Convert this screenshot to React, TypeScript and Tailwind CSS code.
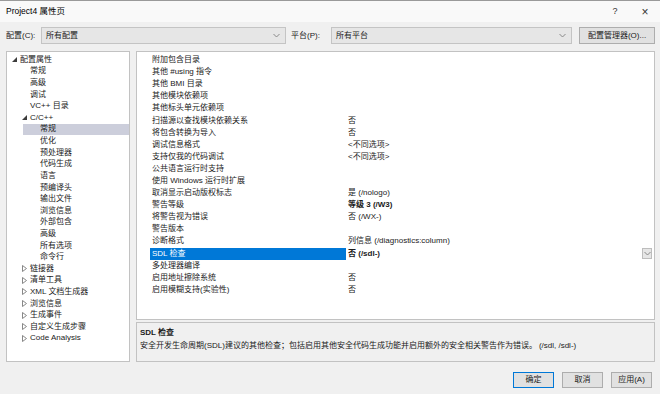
import React from 'react'

type TreeItem = {
    label: string
    level: 0 | 1 | 2
    toggle?: 'open' | 'closed'
    selected?: boolean
}

const tree: TreeItem[] = [
    { label: '配置属性', level: 0, toggle: 'open' },
    { label: '常规', level: 1 },
    { label: '高级', level: 1 },
    { label: '调试', level: 1 },
    { label: 'VC++ 目录', level: 1 },
    { label: 'C/C++', level: 1, toggle: 'open' },
    { label: '常规', level: 2, selected: true },
    { label: '优化', level: 2 },
    { label: '预处理器', level: 2 },
    { label: '代码生成', level: 2 },
    { label: '语言', level: 2 },
    { label: '预编译头', level: 2 },
    { label: '输出文件', level: 2 },
    { label: '浏览信息', level: 2 },
    { label: '外部包含', level: 2 },
    { label: '高级', level: 2 },
    { label: '所有选项', level: 2 },
    { label: '命令行', level: 2 },
    { label: '链接器', level: 1, toggle: 'closed' },
    { label: '清单工具', level: 1, toggle: 'closed' },
    { label: 'XML 文档生成器', level: 1, toggle: 'closed' },
    { label: '浏览信息', level: 1, toggle: 'closed' },
    { label: '生成事件', level: 1, toggle: 'closed' },
    { label: '自定义生成步骤', level: 1, toggle: 'closed' },
    { label: 'Code Analysis', level: 1, toggle: 'closed' },
]

const indent = ['pl-[3px]', 'pl-[13px]', 'pl-[23px]']

type Prop = { name: string; value?: string; bold?: boolean; selected?: boolean }

const props: Prop[] = [
    { name: '附加包含目录' },
    { name: '其他 #using 指令' },
    { name: '其他 BMI 目录' },
    { name: '其他模块依赖项' },
    { name: '其他标头单元依赖项' },
    { name: '扫描源以查找模块依赖关系', value: '否' },
    { name: '将包含转换为导入', value: '否' },
    { name: '调试信息格式', value: '<不同选项>' },
    { name: '支持仅我的代码调试', value: '<不同选项>' },
    { name: '公共语言运行时支持' },
    { name: '使用 Windows 运行时扩展' },
    { name: '取消显示启动版权标志', value: '是 (/nologo)' },
    { name: '警告等级', value: '等级 3 (/W3)', bold: true },
    { name: '将警告视为错误', value: '否 (/WX-)' },
    { name: '警告版本' },
    { name: '诊断格式', value: '列信息 (/diagnostics:column)' },
    { name: 'SDL 检查', value: '否 (/sdl-)', bold: true, selected: true },
    { name: '多处理器编译' },
    { name: '启用地址擦除系统', value: '否' },
    { name: '启用模糊支持(实验性)', value: '否' },
]

function Chevron() {
    return (
        <svg width="7" height="5" viewBox="0 0 7 5" className="shrink-0">
            <polyline points="0.5,1 3.5,4 6.5,1" fill="none" stroke="#808080" strokeWidth="0.9" />
        </svg>
    )
}

function Toggle({ kind }: { kind?: 'open' | 'closed' }) {
    return (
        <span className="flex w-[10px] shrink-0 items-center pl-[2px]">
            {kind === 'open' && (
                <svg width="5" height="5" viewBox="0 0 5 5">
                    <polygon points="5,0 5,5 0,5" fill="#3c3c3c" />
                </svg>
            )}
            {kind === 'closed' && (
                <svg width="5" height="7" viewBox="0 0 5 7">
                    <polygon points="0.5,0.5 4.5,3.5 0.5,6.5" fill="none" stroke="#7a7a7a" strokeWidth="0.9" />
                </svg>
            )}
        </span>
    )
}

function Button({ label, primary }: { label: string; primary?: boolean }) {
    return (
        <div
            className={`flex h-[16px] w-[41px] items-center justify-center border bg-[#e1e1e1] text-[8px] text-[#1a1a1a] ${primary ? 'border-[#0078d7]' : 'border-[#adadad]'}`}
        >
            {label}
        </div>
    )
}

export default function App() {
    return (
        <div className="flex h-[394px] w-[660px] flex-col overflow-hidden border-t border-[#9a9a9a] bg-[#f0f0f0] font-['Liberation_Sans','Noto_Sans_CJK_SC',sans-serif] text-[8px] leading-none text-[#1a1a1a]">

            {/* Title bar */}
            <div className="flex h-[21px] shrink-0 items-center bg-[#f9f9f9] pl-[6px]">
                <span className="text-[8.5px] text-black">Project4 属性页</span>
                <span className="ml-auto w-[16px] text-center text-[9px] text-[#333]">?</span>
                <span className="ml-[15px] mr-[8px] w-[14px] text-center text-[12px] font-light text-[#333]">×</span>
            </div>

            {/* Config row */}
            <div className="mt-[5px] flex h-[17px] shrink-0 items-center">
                <span className="ml-[6px] w-[35px]">配置(C):</span>
                <div className="flex h-[17px] w-[245px] items-center border border-[#c4c4c4] bg-[#e6e6e6] pl-[4px] pr-[5px]">
                    <span>所有配置</span>
                    <span className="ml-auto"><Chevron /></span>
                </div>
                <span className="ml-[5px] w-[40px]">平台(P):</span>
                <div className="flex h-[17px] w-[241px] items-center border border-[#c4c4c4] bg-[#e6e6e6] pl-[4px] pr-[5px]">
                    <span>所有平台</span>
                    <span className="ml-auto"><Chevron /></span>
                </div>
                <div className="ml-[7px] flex h-[17px] w-[76px] items-center justify-center border border-[#adadad] bg-[#e1e1e1]">
                    配置管理器(O)...
                </div>
            </div>

            {/* Main */}
            <div className="mt-[7px] flex h-[311px] shrink-0">
                {/* Tree */}
                <div className="ml-[6px] h-full w-[124px] border border-[#c2c2c2] bg-white pt-[2px]">
                    {tree.map((item, i) => (
                        <div key={i} className={`flex h-[11.62px] items-center ${item.selected ? 'ml-[16px] bg-[#cccedb] pl-[7px]' : indent[item.level]}`}>
                            <Toggle kind={item.toggle} />
                            <span className="whitespace-nowrap">{item.label}</span>
                        </div>
                    ))}
                </div>

                <div className="ml-[6px] flex w-[519px] flex-col">
                    {/* Property grid */}
                    <div className="h-[269px] border border-[#c2c2c2] bg-white pt-[2px]">
                        {props.map((p, i) => (
                            <div key={i} className="flex h-[12.1px] items-center">
                                <div className={`ml-[13px] flex h-full w-[196px] items-center pl-[2px] ${p.selected ? 'bg-[#0078d7] text-white' : ''}`}>
                                    <span className="whitespace-nowrap">{p.name}</span>
                                </div>
                                <div className={`flex h-full flex-1 items-center pl-[2px] ${p.bold ? 'font-bold' : ''}`}>
                                    <span className="whitespace-nowrap">{p.value}</span>
                                    {p.selected && (
                                        <div className="ml-auto mr-[2px] flex h-[11px] w-[10px] items-center justify-center border border-[#bdbdbd] bg-[#e6e6e6]">
                                            <Chevron />
                                        </div>
                                    )}
                                </div>
                            </div>
                        ))}
                    </div>

                    {/* Description */}
                    <div className="mt-[2px] flex h-[40px] flex-col gap-[5px] border border-[#c2c2c2] bg-[#f0f0f0] pl-[3px] pt-[6px]">
                        <span className="font-bold">SDL 检查</span>
                        <span className="whitespace-nowrap">
                            安全开发生命周期(SDL)建议的其他检查；包括启用其他安全代码生成功能并启用额外的安全相关警告作为错误。
                            <span className="ml-[2px]">(/sdl, /sdl-)</span>
                        </span>
                    </div>
                </div>
            </div>

            {/* Buttons */}
            <div className="mt-[10px] flex shrink-0 justify-end gap-[8px] pr-[8px]">
                <Button label="确定" primary />
                <Button label="取消" />
                <Button label="应用(A)" />
            </div>
        </div>
    )
}
